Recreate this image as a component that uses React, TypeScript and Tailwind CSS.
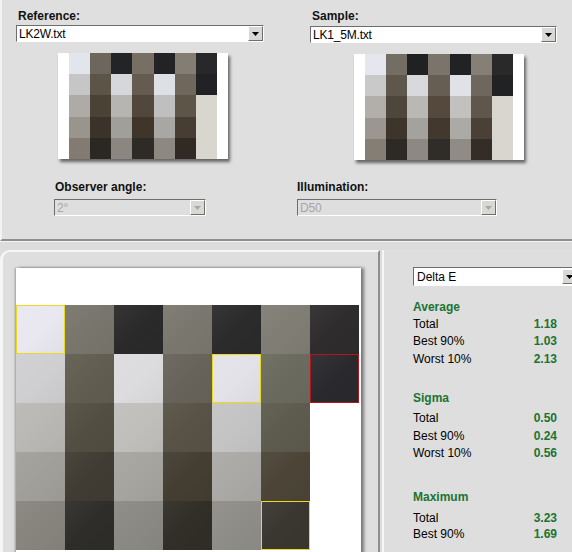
import React from "react";

type Cell = { c: string; mark?: "y" | "r" };

// 7 columns x 5 rows; last column only has two patches
const refChart: string[][] = [
  ["#e3e5ec", "#6d665c", "#222426", "#776e64", "#232325", "#847d74", "#28282a"],
  ["#c6c6c6", "#5d5448", "#d5d7da", "#665b50", "#dde0e5", "#6f665c", "#222226"],
  ["#aeaba7", "#4b4236", "#b7b5b1", "#52473b", "#bfbfbf", "#5e5549", "#d9d6ce"],
  ["#99948c", "#3b332a", "#a19f99", "#40352b", "#a9a7a3", "#483d33", "#d9d6ce"],
  ["#837b71", "#2b2723", "#8b8680", "#2e2a25", "#8d8880", "#312a24", "#d9d6ce"],
];

const sampleChart: string[][] = [
  ["#e6e6ee", "#736d63", "#1f2122", "#7b746a", "#212224", "#857f76", "#29292a"],
  ["#c9c9ca", "#5f574b", "#d8d9dc", "#675e53", "#e0e2e7", "#6f675d", "#202224"],
  ["#b2afaa", "#4e463a", "#bab8b4", "#55493d", "#c2c1c0", "#5f574b", "#d8d6cf"],
  ["#9b9790", "#3d352c", "#a4a29c", "#42382e", "#abaaa6", "#4a4035", "#d8d6cf"],
  ["#857e74", "#2d2925", "#8d8982", "#302c27", "#908b84", "#342d27", "#d8d6cf"],
];

const diffChart: Cell[][] = [
  [{ c: "#e9e8f0", mark: "y" }, { c: "#78766c" }, { c: "#2a2a2b" }, { c: "#7a786e" }, { c: "#2c2b2c" }, { c: "#7f7d74" }, { c: "#2e2c2d" }],
  [{ c: "#cfcfd1" }, { c: "#615d51" }, { c: "#dcdcde" }, { c: "#67625a" }, { c: "#e2e2e8", mark: "y" }, { c: "#6b6a5e" }, { c: "#2a292d", mark: "r" }],
  [{ c: "#bab8b4" }, { c: "#534e42" }, { c: "#c0bfbb" }, { c: "#585246" }, { c: "#c5c4c5" }, { c: "#5d5a4e" }, { c: "#ffffff" }],
  [{ c: "#a19f99" }, { c: "#403c33" }, { c: "#a6a49e" }, { c: "#433d32" }, { c: "#aaa9a5" }, { c: "#4b4437" }, { c: "#ffffff" }],
  [{ c: "#87847d" }, { c: "#2f2d29" }, { c: "#8b8983" }, { c: "#312e28" }, { c: "#8e8d87" }, { c: "#3a3630", mark: "y" }, { c: "#ffffff" }],
];

// head/rows = top margins of the heading and of its rows
const stats = [
  { title: "Average", head: "mt-[14px]", rows: "mt-[1px]", h: "h-[17.5px]", items: [["Total", "1.18"], ["Best 90%", "1.03"], ["Worst 10%", "2.13"]] },
  { title: "Sigma", head: "mt-[23px]", rows: "mt-[5px]", h: "h-[17.5px]", items: [["Total", "0.50"], ["Best 90%", "0.24"], ["Worst 10%", "0.56"]] },
  { title: "Maximum", head: "mt-[28px]", rows: "mt-[6px]", h: "h-[16px]", items: [["Total", "3.23"], ["Best 90%", "1.69"]] },
];

function Arrow({ disabled }: { disabled?: boolean }) {
  return (
    <div className="flex h-[15px] w-[15px] shrink-0 items-center justify-center border border-t-white border-l-white border-r-[#6f6f6f] border-b-[#6f6f6f] bg-[#d8d8d4]">
      <svg width="7" height="4" viewBox="0 0 7 4">
        <path d="M0 0h7L3.5 4z" fill={disabled ? "#a8a8a8" : "#000"} />
      </svg>
    </div>
  );
}

function Combo({ value, width, disabled }: { value: string; width: string; disabled?: boolean }) {
  return (
    <div
      className={`flex h-[17px] items-center border border-t-[#6d6d6d] border-l-[#6d6d6d] border-r-white border-b-white ${width} ${
        disabled ? "bg-[#dedede] text-[#a6a6a6]" : "bg-white text-black"
      }`}
    >
      <span className="flex-1 pl-[2px] text-[12px] leading-none tracking-[-0.2px]">{value}</span>
      <Arrow disabled={disabled} />
    </div>
  );
}

function Thumb({ data }: { data: string[][] }) {
  return (
    <div className="flex w-[170px] bg-white px-[11px] shadow-[2px_3px_3px_rgba(0,0,0,0.55)]">
      <div className="grid h-[106px] w-[148px] grid-cols-7 grid-rows-5">
        {data.flatMap((row, r) =>
          row.map((c, i) => <div key={`${r}-${i}`} style={{ background: c }} />)
        )}
      </div>
    </div>
  );
}

function Label({ children }: { children: React.ReactNode }) {
  return <div className="text-[12px] font-bold leading-[14px] text-[#111]">{children}</div>;
}

export default function App() {
  return (
    <div className="h-[552px] w-[572px] overflow-hidden bg-[#dcdcdc] font-['Liberation_Sans',Arial,sans-serif]">
      {/* file pickers + thumbnails */}
      <div className="h-[241px] border-b-2 border-l-2 border-b-[#8e8e8e] border-l-[#f2f2f2] bg-[#dfdfdf]">
        <div className="flex pt-[9px]">
          <div className="ml-[14px] w-[248px]">
            <div className="pl-[2px]">
              <Label>Reference:</Label>
            </div>
            <div className="mt-[2px]">
              <Combo value="LK2W.txt" width="w-[248px]" />
            </div>
            <div className="ml-[42px] mt-[11px]">
              <Thumb data={refChart} />
            </div>
          </div>
          <div className="ml-[46px] w-[247px]">
            <div className="pl-[2px]">
              <Label>Sample:</Label>
            </div>
            <div className="mt-[3px]">
              <Combo value="LK1_5M.txt" width="w-[247px]" />
            </div>
            <div className="ml-[44px] mt-[11px]">
              <Thumb data={sampleChart} />
            </div>
          </div>
        </div>
        <div className="mt-[20px] flex">
          <div className="ml-[52px] w-[152px]">
            <div className="pl-[1px]">
              <Label>Observer angle:</Label>
            </div>
            <div className="mt-[5px]">
              <Combo value="2°" width="w-[152px]" disabled />
            </div>
          </div>
          <div className="ml-[91px] w-[200px]">
            <Label>Illumination:</Label>
            <div className="mt-[5px]">
              <Combo value="D50" width="w-[200px]" disabled />
            </div>
          </div>
        </div>
      </div>

      <div className="h-px bg-[#f4f4f4]" />

      {/* results */}
      <div className="mt-[8px] flex h-[302px]">
        <div className="w-[380px] shrink-0 rounded-tl-[10px] border-t-2 border-l-[3px] border-r-2 border-t-[#f6f6f6] border-l-[#f6f6f6] border-r-[#8e8e8e] bg-[#dedede] pl-[13px] pt-[16px]">
          <div className="h-[300px] w-[345px] bg-white pt-[37px] shadow-[3px_0_3px_rgba(0,0,0,0.45),-1px_0_2px_rgba(0,0,0,0.3)]">
            <div className="grid w-[343px] grid-cols-7">
              {diffChart.flatMap((row, r) =>
                row.map((cell, i) => (
                  <div
                    key={`${r}-${i}`}
                    className={`h-[49px] ${
                      cell.mark === "y"
                        ? "border border-[#ecd81c]"
                        : cell.mark === "r"
                        ? "border border-[#b3161a]"
                        : ""
                    }`}
                    style={{
                      background:
                        cell.c === "#ffffff"
                          ? cell.c
                          : `linear-gradient(135deg, rgba(255,255,255,0.05), rgba(255,255,255,0) 50%, rgba(0,0,0,0.04)), ${cell.c}`,
                    }}
                  />
                ))
              )}
            </div>
          </div>
        </div>

        <div className="ml-[2px] min-w-0 flex-1 overflow-hidden border-l-2 border-l-[#f6f6f6] bg-[#dedede] pl-[29px] pt-[17px]">
          <div className="flex h-[19px] w-[165px] items-center border border-t-[#6d6d6d] border-l-[#6d6d6d] border-r-white border-b-white bg-white">
            <span className="flex-1 pl-[3px] text-[12px] leading-none">Delta E</span>
            <Arrow />
          </div>
          <div className="w-[144px]">
            {stats.map((s) => (
              <div key={s.title} className={s.head}>
                <div className="text-[12px] font-bold leading-[14px] text-[#1a7431]">{s.title}</div>
                <div className={s.rows}>
                  {s.items.map(([k, v]) => (
                    <div key={k} className={`flex items-center justify-between text-[12px] ${s.h}`}>
                      <span className="text-black">{k}</span>
                      <span className="font-bold text-[#1a7431]">{v}</span>
                    </div>
                  ))}
                </div>
              </div>
            ))}
          </div>
        </div>
      </div>
    </div>
  );
}
